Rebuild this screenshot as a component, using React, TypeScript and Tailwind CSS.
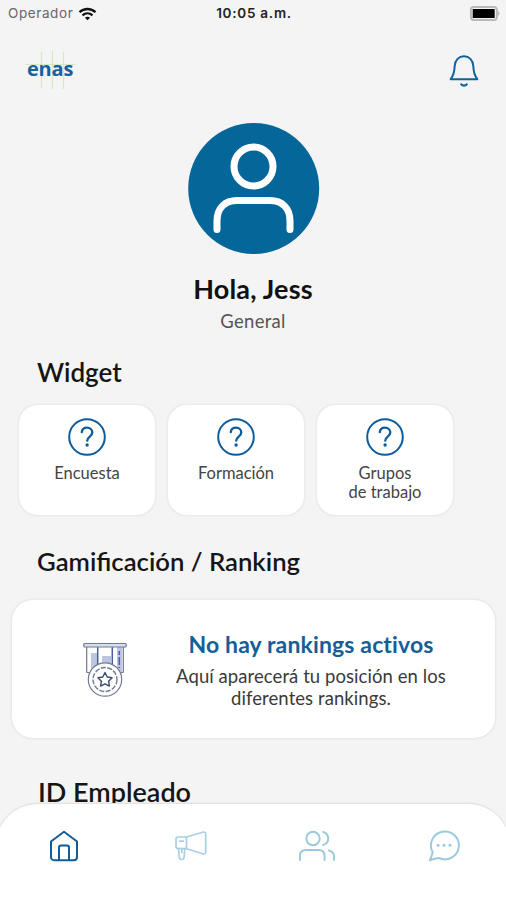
import React from 'react';

const widgets = [
  { id: 'encuesta', lines: ['Encuesta'] },
  { id: 'formacion', lines: ['Formación'] },
  { id: 'grupos', lines: ['Grupos', 'de trabajo'] },
];

function StatusBar() {
  return (
    <div className="grid h-[27px] shrink-0 grid-cols-3 items-center pl-2 pr-[6px] font-['Inter','Liberation_Sans',sans-serif] text-[13.5px]">
      <div className="flex items-center gap-[5px] text-[#666]">
        <span className="leading-none tracking-[0.6px]">Operador</span>
        <svg width="19" height="14" viewBox="0 0 18 14" fill="none" stroke="#111" strokeWidth="2.3">
          <path d="M1 5.2C5.5.9 12.5.9 17 5.2" />
          <path d="M4 8.4c2.9-2.6 7.1-2.6 10 0" />
          <path d="M9 13.2 6.4 10.7c1.5-1.3 3.7-1.3 5.2 0Z" fill="#111" stroke="none" />
        </svg>
      </div>
      <span className="text-center font-semibold leading-none tracking-[0.75px] text-[#222]">10:05 a.m.</span>
      <div className="flex justify-end">
        <svg width="31" height="15" viewBox="0 0 31 15">
          <rect x="1.9" y="1" width="26" height="13" rx="3" fill="#f4f4f4" stroke="#b9b9b9" strokeWidth="2" />
          <rect x="3.7" y="3" width="22" height="9" rx="0.5" fill="#000" />
          <path d="M29.2 5.3c1.6.6 1.6 3.8 0 4.4Z" fill="#aaa" />
        </svg>
      </div>
    </div>
  );
}

function Logo() {
  return (
    <div className="relative h-[42px] w-[54px]">
      <svg className="absolute inset-0" width="54" height="42" viewBox="0 0 54 42" fill="none" stroke="#d3e9c3" strokeWidth="1.2">
        <path d="M2 16.5h50" />
        <path d="M17.5 4v36M28.5 3v38M39.5 4v37" />
      </svg>
      <span className="absolute left-[3px] top-[9px] font-['Open_Sans','Noto_Sans',sans-serif] text-[20px] font-bold leading-[24px] tracking-[-0.2px] text-[#19609c]">
        enas
      </span>
    </div>
  );
}

function BellIcon() {
  return (
    <svg width="30" height="34" viewBox="0 0 30 34" fill="none" stroke="#0f629b" strokeWidth="2" strokeLinejoin="round" strokeLinecap="round">
      <path d="M1.7 25.2h26.6c-3.4-4.3-3.8-8.3-4-13.2C24 6 20 2.2 15 2.2S6 6 5.7 12c-.2 4.9-.6 8.9-4 13.2Z" />
      <path d="M12.3 30.4c1.3 1.7 4.1 1.7 5.4 0" strokeWidth="2.3" />
    </svg>
  );
}

function Avatar() {
  return (
    <svg className="ml-[188px]" width="132" height="132" viewBox="0 0 132 132" fill="none">
      <circle cx="65.7" cy="65.5" r="65.5" fill="#046699" />
      <g stroke="#fff" strokeWidth="7" strokeLinecap="round">
        <circle cx="65.5" cy="43.5" r="19.5" />
        <path d="M29 106.5V98c0-13 8-20.5 20-20.5h33c12 0 20 7.5 20 20.5v8.5" />
      </g>
    </svg>
  );
}

function QuestionIcon() {
  return (
    <svg width="38" height="38" viewBox="0 0 38 38" fill="none" stroke="#0d5c9b" strokeWidth="2.3" strokeLinecap="round" strokeLinejoin="round">
      <circle cx="19" cy="19" r="17.8" strokeWidth="2" />
      <path d="M13.8 14.2c.3-2.9 2.4-4.5 5.2-4.5 3 0 5.3 1.9 5.3 4.8 0 4.2-5.1 3.9-5.1 8.2" />
      <circle cx="19.1" cy="27" r="1.7" fill="#0d5c9b" stroke="none" />
    </svg>
  );
}

function MedalIcon() {
  return (
    <svg width="44" height="56" viewBox="0 0 44 56" fill="none" stroke="#707a92" strokeWidth="1.2" strokeLinejoin="round">
      <path d="M8 11h6.5v15L8 29ZM19 14h9v8h-9ZM34 5h5v25h-5Z" fill="#bcc6e3" stroke="none" />
      <path d="M3.7 5v25.5M40.3 5v25.5M3.7 30.5h3M37.5 30.5h3" />
      <path d="M14.7 5v18M29.3 5v18" stroke="#4d5e9a" strokeWidth="1.5" />
      <path d="M36.3 9v17" stroke="#4d5e9a" strokeWidth="1.5" strokeDasharray="4 2 8 2" />
      <rect x="0.8" y="1.5" width="42.4" height="3.5" rx="1" fill="#d9deeb" />
      <circle cx="22" cy="37.5" r="16.7" fill="#fff" />
      <circle cx="22" cy="37.5" r="12" strokeWidth="1.4" strokeDasharray="5 1.5" />
      <path d="m22 30.5 2.2 4.5 4.9.7-3.5 3.5.8 4.9-4.4-2.3-4.4 2.3.8-4.9-3.5-3.5 4.9-.7Z" stroke="#3f4c6e" strokeWidth="1.4" />
    </svg>
  );
}

function WidgetCard({ lines }: { lines: string[] }) {
  return (
    <div className="flex h-[112px] flex-col items-center rounded-[20px] border border-[#ececec] bg-white pt-[13px] shadow-[0_0_2px_rgba(0,0,0,0.07)]">
      <QuestionIcon />
      <div className="mt-[8px] text-center text-[16.5px] leading-[19px] text-[#444]">
        {lines.map((line) => (
          <p key={line}>{line}</p>
        ))}
      </div>
    </div>
  );
}

function RankingCard() {
  return (
    <div className="ml-[11px] mt-[22px] flex h-[140px] w-[485px] shrink-0 rounded-[22px] border border-[#eaeaea] bg-white shadow-[0_0_2px_rgba(0,0,0,0.08)]">
      <div className="ml-[71px] mt-[42px] w-[44px]">
        <MedalIcon />
      </div>
      <div className="ml-[34px] mt-[29px] w-[300px] text-center">
        <h3 className="text-[23px] font-bold leading-[30px] tracking-[0.14px] text-[#155e98]">No hay rankings activos</h3>
        <p className="mt-[6px] text-[18.5px] leading-[22px] tracking-[0.07px] text-[#3a3a3a]">
          Aquí aparecerá tu posición en los
          <br />
          diferentes rankings.
        </p>
      </div>
    </div>
  );
}

function HomeIcon() {
  return (
    <svg width="30" height="32" viewBox="0 0 30 32" fill="none" stroke="#125d97" strokeWidth="2" strokeLinejoin="round">
      <path d="M2 11.5 15 1.8l13 9.7V27c0 2-1.2 3.2-3.2 3.2H5.2C3.2 30.2 2 29 2 27Z" />
      <path d="M10 30V17.5c0-1.4.6-2 2-2h6c1.4 0 2 .6 2 2V30" />
    </svg>
  );
}

function MegaphoneIcon() {
  return (
    <svg width="34" height="32" viewBox="0 0 34 32" fill="none" stroke="#a9d0e0" strokeWidth="1.7" strokeLinejoin="round" strokeLinecap="round">
      <path d="M12.5 7 28.7 2.2c2-.6 3 .3 3 2v17.5c0 1.7-1 2.7-3 2.1L12.5 18.7Z" />
      <path d="M12.5 7H4.2C2.7 7 2 7.7 2 9.2v7.3c0 1.5.7 2.2 2.2 2.2h8.3" />
      <path d="M4.5 18.7 5.2 27c.2 1.7 1 2.5 2.5 2.5s2.3-.8 2.4-2.5l.6-8.3M7.8 18.7v4M5.5 11.2h3.8" />
    </svg>
  );
}

function PeopleIcon() {
  return (
    <svg width="38" height="32" viewBox="0 0 38 32" fill="none" stroke="#9bcadd" strokeWidth="2" strokeLinecap="round">
      <circle cx="15" cy="8.5" r="6.7" />
      <path d="M2 30v-4.5C2 22 4.2 20 8 20h12.5c3.8 0 6 2 6 5.5V30" />
      <path d="M25.2 2c3.2 1 5 3.3 5 6.5s-1.8 5.5-5 6.5M31 20.5c3.2.8 5 2.8 5 6V30" />
    </svg>
  );
}

function ChatIcon() {
  return (
    <svg width="32" height="32" viewBox="0 0 32 32" fill="none" stroke="#9bcadd" strokeWidth="2" strokeLinejoin="round">
      <path d="M4.7 22.2A14 13.9 0 1 1 11 28c-3.2.3-6 1.1-9.2 2.3 1.3-2.7 2.3-5 2.9-8.1Z" />
      <g fill="#9bcadd" stroke="none">
        <circle cx="10" cy="15.3" r="1.5" />
        <circle cx="16" cy="15.3" r="1.5" />
        <circle cx="22" cy="15.3" r="1.5" />
      </g>
    </svg>
  );
}

function BottomNav() {
  const items = [HomeIcon, MegaphoneIcon, PeopleIcon, ChatIcon];
  return (
    <nav className="relative -ml-[4px] -mt-[5px] h-[98px] w-[514px] shrink-0 rounded-t-[42px] border-t border-[#e2e2e2] bg-white pl-[5px] pr-[3px] shadow-[0_0_2px_rgba(0,0,0,0.1)]">
      <div className="grid grid-cols-4 pt-[26px]">
        {items.map((Icon, i) => (
          <button key={i} className="flex justify-center">
            <Icon />
          </button>
        ))}
      </div>
    </nav>
  );
}

export default function App() {
  return (
    <div className="flex h-[900px] w-[506px] flex-col overflow-hidden bg-[#f4f4f4] font-['Lato',sans-serif]">
      <StatusBar />
      <header className="flex h-[96px] shrink-0 items-start justify-between pl-[24px] pr-[27px] pt-[21px]">
        <Logo />
        <div className="mt-[6px]">
          <BellIcon />
        </div>
      </header>

      <section className="shrink-0 text-center">
        <Avatar />
        <h1 className="mt-[17px] text-[27px] font-bold leading-[34px] tracking-[0.2px] text-[#111]">Hola, Jess</h1>
        <p className="mt-[3px] text-[18.5px] leading-[24px] tracking-[0.3px] text-[#555]">General</p>
      </section>

      <h2 className="ml-[37px] mt-[23px] text-[26px] font-semibold leading-[32px] text-[#151515]">Widget</h2>
      <div className="ml-[18px] mt-[16px] grid w-[436px] grid-cols-3 gap-[11px]">
        {widgets.map((widget) => (
          <WidgetCard key={widget.id} lines={widget.lines} />
        ))}
      </div>

      <h2 className="ml-[37px] mt-[29px] text-[25.7px] font-semibold leading-[32px] text-[#151515]">
        Gamificación / Ranking
      </h2>
      <RankingCard />

      <h2 className="ml-[38px] mt-[37px] text-[27px] font-semibold leading-[32px] text-[#151515]">ID Empleado</h2>
      <BottomNav />
    </div>
  );
}
